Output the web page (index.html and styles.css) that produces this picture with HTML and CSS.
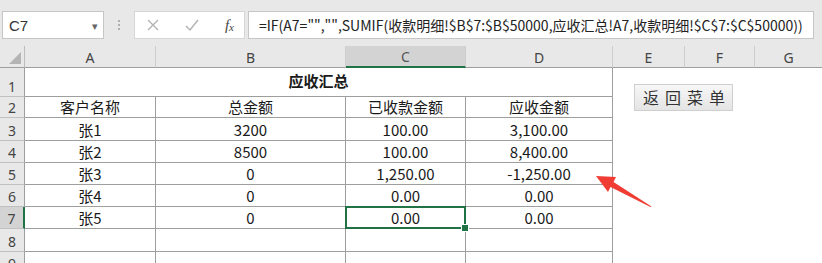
FILE: index.html
```html
<!DOCTYPE html>
<html lang="zh-CN">
<head>
<meta charset="utf-8">
<title>应收汇总</title>
<link rel="stylesheet" href="styles.css">
</head>
<body>
<div class="app">
  <div class="toolbar">
    <div class="namebox"><span class="ref">C7</span><span class="caret">▾</span></div>
    <div class="grip"><i></i><i></i><i></i></div>
    <div class="fxbtns">
      <svg class="ico" width="14" height="14" viewBox="0 0 14 14"><path d="M2 2 L12 12 M12 2 L2 12" stroke="#b3b3b3" stroke-width="1.4" fill="none"/></svg>
      <svg class="ico" width="16" height="14" viewBox="0 0 16 14"><path d="M2 8 L6 12 L14 2" stroke="#b3b3b3" stroke-width="1.5" fill="none"/></svg>
      <span class="fx">f<sub>x</sub></span>
    </div>
    <div class="formula">=IF(A7="","",SUMIF(收款明细!$B$7:$B$50000,应收汇总!A7,收款明细!$C$7:$C$50000))</div>
  </div>

  <div class="sheet">
    <div class="corner"><span class="tri"></span></div>
    <div class="ch">A</div>
    <div class="ch">B</div>
    <div class="ch sel">C</div>
    <div class="ch">D</div>
    <div class="ch">E</div>
    <div class="ch">F</div>
    <div class="ch last">G</div>

    <div class="rh">1</div>
    <div class="c title">应收汇总</div>
    <div class="c blank"></div><div class="c blank"></div><div class="c blank last"></div>

    <div class="rh">2</div>
    <div class="c">客户名称</div><div class="c">总金额</div><div class="c">已收款金额</div><div class="c edge">应收金额</div>
    <div class="c blank"></div><div class="c blank"></div><div class="c blank last"></div>

    <div class="rh">3</div>
    <div class="c">张1</div><div class="c">3200</div><div class="c">100.00</div><div class="c edge">3,100.00</div>
    <div class="c blank"></div><div class="c blank"></div><div class="c blank last"></div>

    <div class="rh">4</div>
    <div class="c">张2</div><div class="c">8500</div><div class="c">100.00</div><div class="c edge">8,400.00</div>
    <div class="c blank"></div><div class="c blank"></div><div class="c blank last"></div>

    <div class="rh">5</div>
    <div class="c">张3</div><div class="c">0</div><div class="c">1,250.00</div><div class="c edge">-1,250.00</div>
    <div class="c blank"></div><div class="c blank"></div><div class="c blank last"></div>

    <div class="rh">6</div>
    <div class="c">张4</div><div class="c">0</div><div class="c">0.00</div><div class="c edge">0.00</div>
    <div class="c blank"></div><div class="c blank"></div><div class="c blank last"></div>

    <div class="rh sel">7</div>
    <div class="c">张5</div><div class="c">0</div><div class="c active">0.00</div><div class="c edge">0.00</div>
    <div class="c blank"></div><div class="c blank"></div><div class="c blank last"></div>

    <div class="rh">8</div>
    <div class="c"></div><div class="c"></div><div class="c"></div><div class="c edge"></div>
    <div class="c blank"></div><div class="c blank"></div><div class="c blank last"></div>

    <div class="rh">9</div>
    <div class="c"></div><div class="c"></div><div class="c"></div><div class="c edge"></div>
    <div class="c blank"></div><div class="c blank"></div><div class="c blank last"></div>

    <button class="menu-btn">返回菜单</button>
    <svg class="arrow" width="70" height="45" viewBox="590 170 70 45">
      <polygon fill="#f03c33" points="596,176 616,177 613.5,182 651.5,206.5 650.5,207 610.5,187 608,192"/>
    </svg>
  </div>
</div>
</body>
</html>
```

FILE: styles.css
```css
* { box-sizing: border-box; }
html, body { margin: 0; padding: 0; }
body {
  width: 822px;
  height: 263px;
  overflow: hidden;
  background: #ffffff;
  font-family: "Noto Sans CJK SC", "Noto Sans", sans-serif;
  color: #222;
}
.app { width: 822px; height: 263px; overflow: hidden; }

.toolbar {
  height: 46px;
  background: #e8e8e8;
  display: flex;
  align-items: flex-start;
  padding: 11px 0 0 2px;
}
.namebox {
  width: 102px;
  height: 28px;
  background: #fff;
  border: 1px solid #c6c6c6;
  display: flex;
  align-items: center;
  justify-content: space-between;
  padding: 0 5px 0 6px;
}
.ref {
  font-family: "Liberation Sans", sans-serif;
  font-size: 15px;
  color: #333;
}
.caret { font-size: 11px; color: #666; }
.grip {
  width: 30px;
  height: 28px;
  display: flex;
  flex-direction: column;
  align-items: center;
  justify-content: center;
  gap: 2px;
}
.grip i { display: block; width: 2px; height: 2px; background: #b0b0b0; }
.fxbtns {
  width: 111px;
  height: 28px;
  background: #fff;
  border: 1px solid #d6d6d6;
  display: flex;
  align-items: center;
  padding: 0 10px 0 11px;
  gap: 0;
  justify-content: space-between;
}
.fx {
  font-family: "Liberation Serif", serif;
  font-style: italic;
  font-size: 15px;
  color: #444;
}
.fx sub { font-size: 11px; vertical-align: -1px; }
.formula {
  margin-left: 3px;
  width: 566px;
  height: 28px;
  background: #fff;
  border: 1px solid #c6c6c6;
  font-size: 14px;
  line-height: 26px;
  padding-left: 10px;
  color: #222;
  white-space: nowrap;
  overflow: hidden;
}

.sheet {
  position: relative;
  display: grid;
  grid-template-columns: 25px 131px 190px 120px 147px 72px 70px 1fr;
  grid-template-rows: 22px 29px 21px 23px 22px 22px 22px 22px 23px 22px;
}
.corner {
  background: #e8e8e8;
  border-right: 1px solid #bdbdbd;
  border-bottom: 1px solid #9e9e9e;
  position: relative;
}
.tri {
  position: absolute;
  right: 3px;
  bottom: 3px;
  width: 0;
  height: 0;
  border-left: 12px solid transparent;
  border-bottom: 12px solid #b4b4b4;
}
.ch {
  background: #e8e8e8;
  border-right: 1px solid #cdcdcd;
  border-bottom: 1px solid #9e9e9e;
  display: flex;
  align-items: center;
  justify-content: center;
  font-family: "Noto Sans", sans-serif;
  font-size: 14px;
  color: #444;
  padding-top: 1px;
}
.ch.sel {
  background: #d3d3d3;
  border-bottom: 2px solid #217346;
  color: #555;
}
.ch.last { border-right: none; }
.rh {
  background: #e8e8e8;
  border-right: 1px solid #9e9e9e;
  border-bottom: 1px solid #c0c0c0;
  display: flex;
  align-items: flex-end;
  justify-content: center;
  font-family: "Noto Sans", sans-serif;
  font-size: 14px;
  line-height: 18px;
  color: #444;
  padding-bottom: 0;
}
.rh.sel {
  background: #d3d3d3;
  border-right: 2px solid #217346;
}
.c {
  border-right: 1px solid #9e9e9e;
  border-bottom: 1px solid #9e9e9e;
  display: flex;
  align-items: flex-end;
  justify-content: center;
  font-size: 15px;
  line-height: 20px;
  color: #1a1a1a;
  white-space: nowrap;
  position: relative;
}
.c.blank { border: none; }
.c.title {
  grid-column: 2 / span 4;
  font-weight: bold;
  align-items: center;
  padding-bottom: 2px;
}
.c.active::after {
  content: "";
  position: absolute;
  left: -1px;
  top: -1px;
  right: -1px;
  bottom: -1px;
  border: 2px solid #217346;
}
.c.active::before {
  content: "";
  position: absolute;
  right: -4px;
  bottom: -4px;
  width: 6px;
  height: 6px;
  background: #217346;
  border: 1px solid #fff;
  z-index: 2;
}

.menu-btn {
  position: absolute;
  left: 634px;
  top: 38px;
  width: 99px;
  height: 27px;
  border: 1px solid #cfcfcf;
  background: linear-gradient(#f7f7f7, #e4e4e4);
  font-family: "Noto Sans CJK SC", sans-serif;
  font-size: 16px;
  letter-spacing: 6px;
  color: #333;
  padding: 0 0 0 8px;
  text-align: left;
  line-height: 25px;
}
.arrow {
  position: absolute;
  left: 590px;
  top: 124px;
}
```
